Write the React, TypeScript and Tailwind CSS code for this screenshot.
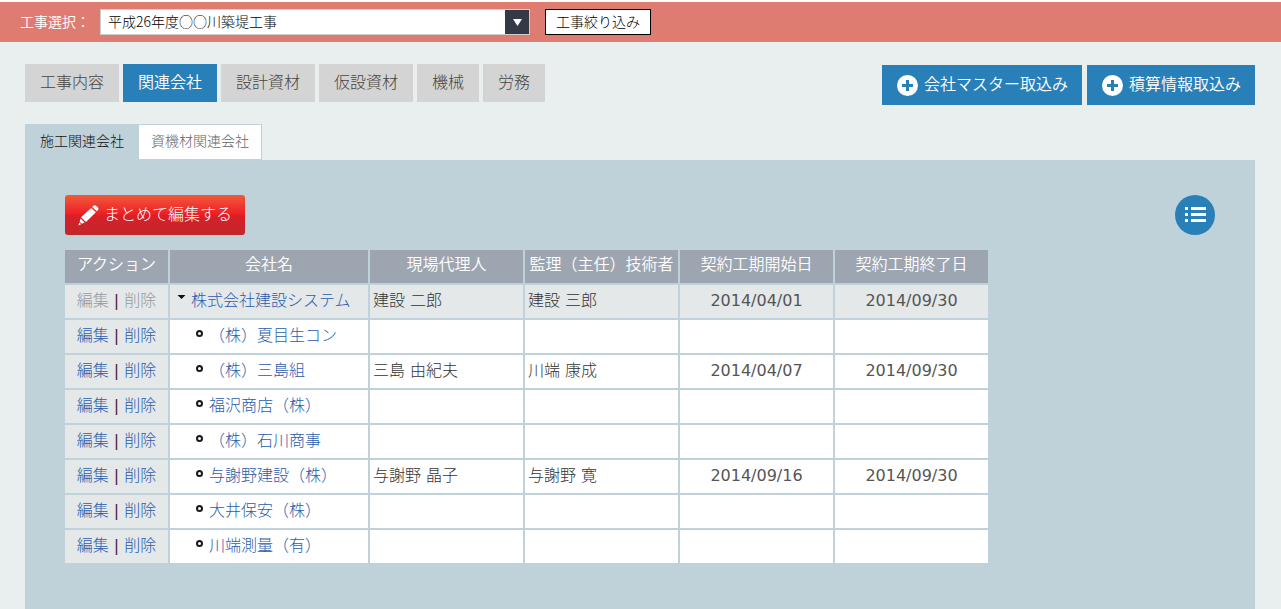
import { useState } from 'react'

interface Company {
  name: string
  agent: string
  engineer: string
  start: string
  end: string
  parent?: boolean
}

const companies: Company[] = [
  { name: '株式会社建設システム', agent: '建設 二郎', engineer: '建設 三郎', start: '2014/04/01', end: '2014/09/30', parent: true },
  { name: '（株）夏目生コン', agent: '', engineer: '', start: '', end: '' },
  { name: '（株）三島組', agent: '三島 由紀夫', engineer: '川端 康成', start: '2014/04/07', end: '2014/09/30' },
  { name: '福沢商店（株）', agent: '', engineer: '', start: '', end: '' },
  { name: '（株）石川商事', agent: '', engineer: '', start: '', end: '' },
  { name: '与謝野建設（株）', agent: '与謝野 晶子', engineer: '与謝野 寛', start: '2014/09/16', end: '2014/09/30' },
  { name: '大井保安（株）', agent: '', engineer: '', start: '', end: '' },
  { name: '川端測量（有）', agent: '', engineer: '', start: '', end: '' },
]

const mainTabs = ['工事内容', '関連会社', '設計資材', '仮設資材', '機械', '労務']

const columns = [
  { label: 'アクション', width: 'w-[103px]' },
  { label: '会社名', width: 'w-[198px]' },
  { label: '現場代理人', width: 'w-[153px]' },
  { label: '監理（主任）技術者', width: 'w-[153px]' },
  { label: '契約工期開始日', width: 'w-[153px]' },
  { label: '契約工期終了日', width: 'w-[153px]' },
]

function PlusIcon() {
  return (
    <svg className="h-[21px] w-[21px] shrink-0" viewBox="0 0 21 21" aria-hidden="true">
      <circle cx="10.5" cy="10.5" r="10.5" fill="#fff" />
      <path d="M9 5h3v4h4v3h-4v4H9v-4H5V9h4z" fill="#2980b9" />
    </svg>
  )
}

function PencilIcon() {
  return (
    <svg className="h-[21px] w-[21px] shrink-0" viewBox="0 0 21 21" fill="#fff" aria-hidden="true">
      <path d="M15.200.9a2 2 0 0 1 2.200-.3c1.200.5 2.300 1.500 2.900 2.500a1.800 1.800 0 0 1-.3 2l-1.100 1.100-4.700-4.300z" />
      <path d="M13.200 2.900l4.700 4.400L8 16.900 3.100 12.300z" />
      <path d="M2.500 13.600l4.100 3.800-2.600 1.300-2.300-2z" />
      <path d="M1.400 17.600l1.700 1.600L.3 20.500z" />
    </svg>
  )
}

function ListIcon() {
  return (
    <svg className="h-10 w-10" viewBox="0 0 40 40" fill="#fff" aria-hidden="true">
      <path d="M10 12h3v3h-3zM16 12h15v3H16zM10 18h3v3h-3zM16 18h15v3H16zM10 24h3v3h-3zM16 24h15v3H16z" />
    </svg>
  )
}

function CompanyRow({ company }: { company: Company }) {
  const bg = company.parent ? 'bg-[#e4e8e9]' : 'bg-white'
  const action = company.parent ? 'text-[#96999e]' : 'text-[#2b5cab]'

  return (
    <tr className="h-[33px]">
      <td className="bg-[#e4e8e9] p-0 pb-0.5 text-center font-normal text-[#501e2d]">
        <a href="#" className={`font-light ${action}`}>編集</a> | <a href="#" className={`font-light ${action}`}>削除</a>
      </td>
      <td className={`${bg} p-0 pb-0.5`}>
        <div className={`flex items-center ${company.parent ? 'gap-[5px] pl-[7px]' : 'gap-1.5 pl-[26px]'}`}>
          {company.parent ? (
            <svg className="mb-2 h-1 w-[9px]" viewBox="0 0 9 4" aria-hidden="true">
              <path d="M.5 0h8L4.500 4z" fill="#111" />
            </svg>
          ) : (
            <svg className="mb-1 h-[7px] w-[7px]" viewBox="0 0 7 7" aria-hidden="true">
              <circle cx="3.500" cy="3.500" r="2.500" fill="#fff" stroke="#1a1a1a" strokeWidth="2" />
            </svg>
          )}
          <a href="#" className="text-[#2b5cab]">{company.name}</a>
        </div>
      </td>
      <td className={`${bg} px-[3px] pt-0 pb-0.5`}>{company.agent}</td>
      <td className={`${bg} px-[3px] pt-0 pb-0.5`}>{company.engineer}</td>
      <td className={`${bg} p-0 pb-0.5 text-center font-normal text-[#555]`}>{company.start}</td>
      <td className={`${bg} p-0 pb-0.5 text-center font-normal text-[#555]`}>{company.end}</td>
    </tr>
  )
}

export default function App() {
  const [tab, setTab] = useState('関連会社')

  return (
    <div className="flex min-h-screen flex-col border-t-2 border-white bg-[#e9eeef] font-['DejaVu_Sans','Noto_Sans_CJK_JP',sans-serif] text-base leading-6 font-light text-[#333]">
      {/* Construction picker */}
      <header className="flex h-10 items-center bg-[#df7c72] px-5 text-sm">
        <label htmlFor="work" className="w-20 font-[350] text-white">工事選択：</label>
        <div className="relative w-[430px]">
          <select
            id="work"
            className="block h-[26px] w-full appearance-none border border-[#ccc] bg-white pr-7 pb-0.5 pl-[7px] font-['Noto_Sans_CJK_JP',sans-serif] leading-5 text-black"
          >
            <option>平成26年度○○川築堤工事</option>
          </select>
          <span className="pointer-events-none absolute inset-y-px right-px flex w-6 items-center justify-center bg-[#333a45]">
            <svg className="h-[7px] w-[9px]" viewBox="0 0 9 7" aria-hidden="true">
              <path d="M0 0h9L4.500 7z" fill="#fff" />
            </svg>
          </span>
        </div>
        <button className="ml-[15px] h-[26px] border border-black bg-white px-2.5 leading-5 text-black">工事絞り込み</button>
      </header>

      <main className="flex grow flex-col px-[25px] pt-[22px] pr-[26px]">
        <div className="flex items-start justify-between">
          <nav className="flex gap-1">
            {mainTabs.map((name) => (
              <button
                key={name}
                onClick={() => setTab(name)}
                className={`h-[38px] px-[15px] ${tab === name ? 'bg-[#2980b9] font-[350] text-white' : 'bg-[#d4d4d4] text-[#444]'}`}
              >
                {name}
              </button>
            ))}
          </nav>
          <div className="flex gap-[5px] pt-px font-[350] text-white">
            <button className="flex h-10 items-center gap-1.5 bg-[#2980b9] pr-3.5 pl-[15px]">
              <PlusIcon />
              会社マスター取込み
            </button>
            <button className="flex h-10 items-center gap-1.5 bg-[#2980b9] pr-3.5 pl-[15px]">
              <PlusIcon />
              積算情報取込み
            </button>
          </div>
        </div>

        {/* Sub tabs */}
        <div className="mt-[19px] flex h-9 text-sm">
          <button className="bg-[#c0d2d9] pr-3.5 pb-0.5 pl-[15px] text-[#111]">施工関連会社</button>
          <button className="border border-[#c0d2d9] bg-white px-3 pb-0.5 text-[#666]">資機材関連会社</button>
        </div>

        <section className="grow bg-[#c0d2d9] px-10 pt-[35px] pb-10">
          <div className="flex items-center justify-between">
            <button className="flex h-10 items-center gap-[5px] rounded-[3px] bg-[linear-gradient(#f15a3c,#ed1c24_50%,#d91f28_50%,#c1272d)] px-[13px] text-white">
              <PencilIcon />
              まとめて編集する
            </button>
            <button aria-label="一覧" className="rounded-full bg-[#2980b9]">
              <ListIcon />
            </button>
          </div>

          <table className="-mx-0.5 mt-[13px] table-fixed border-separate border-spacing-0.5 whitespace-nowrap">
            <thead>
              <tr className="h-[33px]">
                {columns.map((col) => (
                  <th key={col.label} className={`${col.width} bg-[#9da5b1] p-0 pb-1 font-[350] text-white`}>
                    {col.label}
                  </th>
                ))}
              </tr>
            </thead>
            <tbody>
              {companies.map((company) => (
                <CompanyRow key={company.name} company={company} />
              ))}
            </tbody>
          </table>
        </section>
      </main>
    </div>
  )
}
